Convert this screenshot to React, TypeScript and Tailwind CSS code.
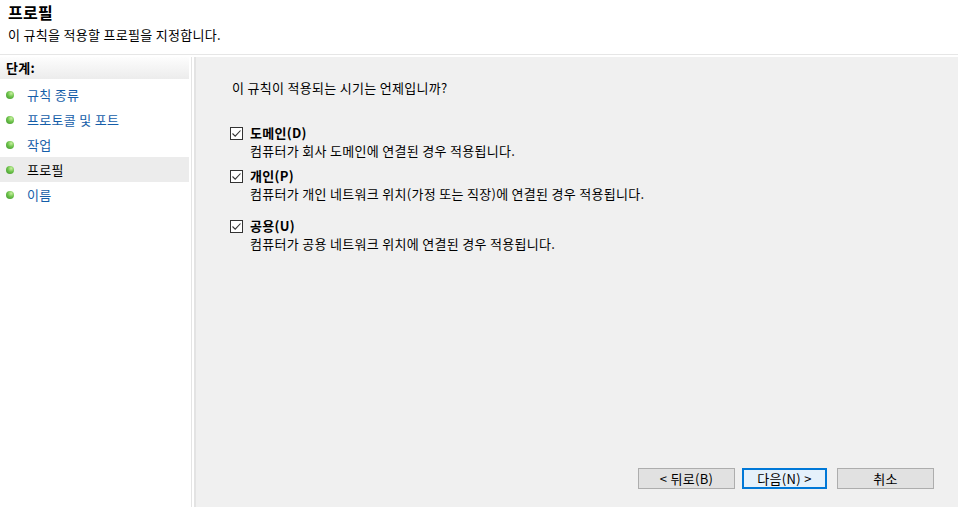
import * as React from "react";

const steps = [
  { label: "규칙 종류", active: false },
  { label: "프로토콜 및 포트", active: false },
  { label: "작업", active: false },
  { label: "프로필", active: true },
  { label: "이름", active: false },
];

const profiles = [
  { name: "도메인(D)", desc: "컴퓨터가 회사 도메인에 연결된 경우 적용됩니다.", gap: "mt-0" },
  { name: "개인(P)", desc: "컴퓨터가 개인 네트워크 위치(가정 또는 직장)에 연결된 경우 적용됩니다.", gap: "mt-[7px]" },
  { name: "공용(U)", desc: "컴퓨터가 공용 네트워크 위치에 연결된 경우 적용됩니다.", gap: "mt-[14px]" },
];

function Bullet() {
  return (
    <span className="w-[8px] h-[8px] rounded-full shrink-0 bg-[radial-gradient(circle_at_65%_30%,#c8f0a0_0%,#6cc24a_45%,#3b8f2a_100%)]" />
  );
}

function Check() {
  return (
    <span className="w-[13px] h-[13px] border border-[#333] bg-white flex items-center justify-center shrink-0">
      <svg width="11" height="11" viewBox="0 0 11 11">
        <path d="M1.5 5.5 L4.2 8.2 L9.5 2.5" fill="none" stroke="#333" strokeWidth="1.1" />
      </svg>
    </span>
  );
}

function Btn({ children, primary }: { children: React.ReactNode; primary?: boolean }) {
  return (
    <button
      type="button"
      className={
        primary
          ? "w-[85px] h-[21px] bg-[#e5f1fb] border-2 border-[#0078d7] text-[13px] text-black flex items-center justify-center"
          : "w-[97px] h-[21px] bg-[#e1e1e1] border border-[#adadad] text-[13px] text-black flex items-center justify-center"
      }
    >
      {children}
    </button>
  );
}

export default function App() {
  return (
    <div className="w-[958px] h-[507px] bg-white flex flex-col overflow-hidden text-[13px] tracking-[0.3px] text-black font-['Noto_Sans_CJK_KR','Malgun_Gothic',sans-serif]">
      <div className="h-[55px] shrink-0 px-[8px] pt-[2px] border-b border-[#e6e6e6]">
        <div className="text-[16px] font-bold leading-[20px]">프로필</div>
        <div className="leading-[18px] mt-[4px]">이 규칙을 적용할 프로필을 지정합니다.</div>
      </div>
      <div className="flex flex-1 min-h-0 pt-[2px]">
        <div className="w-[192px] shrink-0 bg-white border-r border-[#e4e4e4] pr-[2px]">
          <div className="h-[22px] px-[6px] flex items-center font-bold bg-gradient-to-b from-[#fdfdfd] to-[#ececec]">
            단계:
          </div>
          <div className="pt-[3px]">
            {steps.map((s) => (
              <div
                key={s.label}
                className={
                  "h-[25px] flex items-center gap-[13px] pl-[6px] " +
                  (s.active ? "bg-[#ececec] text-black" : "text-[#155ea9]")
                }
              >
                <Bullet />
                <span className="leading-[18px]">{s.label}</span>
              </div>
            ))}
          </div>
        </div>
        <div className="w-[2px] shrink-0 bg-white" />
        <div className="flex-1 flex flex-col bg-[#f0f0f0] border-l-2 border-[#e3e3e3] pl-[36px]">
          <div className="mt-[22px] leading-[18px]">이 규칙이 적용되는 시기는 언제입니까?</div>
          <div className="mt-[27px] flex flex-col -ml-[2px]">
            {profiles.map((p) => (
              <div key={p.name} className={p.gap}>
                <div className="flex items-center gap-[7px] h-[18px]">
                  <Check />
                  <span className="font-bold leading-[18px]">{p.name}</span>
                </div>
                <div className="pl-[20px] leading-[18px]">{p.desc}</div>
              </div>
            ))}
          </div>
          <div className="mt-auto mb-[18px] flex pl-[406px]">
            <Btn>&lt; 뒤로(B)</Btn>
            <div className="w-[7px]" />
            <Btn primary>다음(N) &gt;</Btn>
            <div className="w-[10px]" />
            <Btn>취소</Btn>
          </div>
        </div>
      </div>
    </div>
  );
}
